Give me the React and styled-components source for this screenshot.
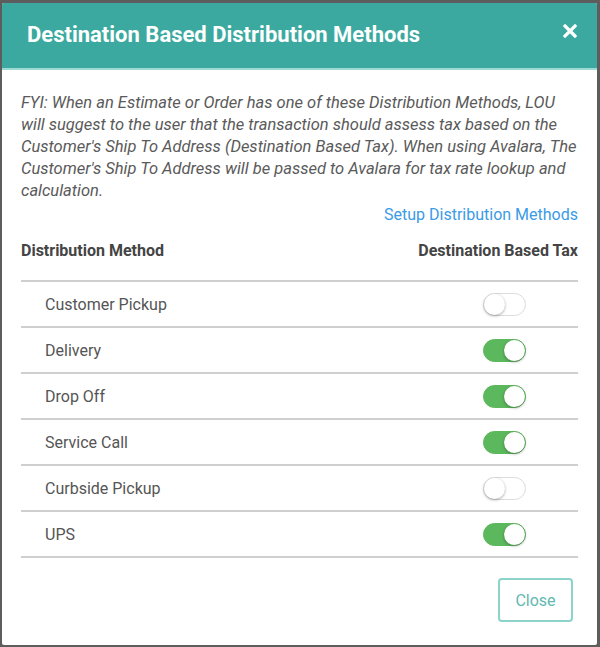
import React from "react";
import styled, { createGlobalStyle } from "styled-components";

const Global = createGlobalStyle`
  html, body { margin: 0; padding: 0; background: #5d5d5d; }
  body { font-family: Roboto, "Liberation Sans", Arial, sans-serif; }
  * { box-sizing: border-box; }
`;

const Backdrop = styled.div`
  padding: 3px 3px 2px 2px;
  height: 647px;
`;

const Dialog = styled.div`
  background: #fff;
  height: 642px;
  border-radius: 2px;
  display: flex;
  flex-direction: column;
  overflow: hidden;
`;

const Header = styled.div`
  background: #3ba99f;
  height: 67px;
  border-bottom: 2px solid #9fd9d3;
  display: flex;
  align-items: center;
  justify-content: space-between;
  padding: 0 20px 0 25px;
`;

const Title = styled.h2`
  margin: 0;
  color: #fff;
  font-size: 22px;
  font-weight: 700;
  margin-top: -2px;
`;

const CloseX = styled.button`
  border: none;
  background: none;
  color: #fff;
  padding: 0;
  margin-top: -10px;
  cursor: pointer;
  display: flex;
`;

const Body = styled.div`
  padding: 22px 19px 0 19px;
  display: flex;
  flex-direction: column;
`;

const Note = styled.p`
  margin: 0;
  font-style: italic;
  color: #5a5a5a;
  font-size: 16.5px;
  line-height: 22px;
`;

const Link = styled.a`
  align-self: flex-end;
  color: #3a9be6;
  font-size: 16px;
  text-decoration: none;
  line-height: 24px;
  margin-top: 1px;
`;

const TableHead = styled.div`
  display: flex;
  justify-content: space-between;
  font-weight: 700;
  color: #444;
  font-size: 16px;
  line-height: 20px;
  padding: 14px 0 19px;
  border-bottom: 2px solid #cfcfcf;
`;

const Row = styled.div`
  display: flex;
  justify-content: space-between;
  align-items: center;
  height: 46px;
  border-bottom: 2px solid #cfcfcf;
  padding: 0 52px 0 24px;
  color: #555;
  font-size: 16px;
`;

const Track = styled.span`
  width: 43px;
  height: 23px;
  border-radius: 12px;
  background: ${(p) => (p.$on ? "#5cb85c" : "#fff")};
  border: 1px solid ${(p) => (p.$on ? "#5cb85c" : "#dcdcdc")};
  position: relative;
  display: inline-block;
`;

const Knob = styled.span`
  position: absolute;
  top: 0px;
  left: ${(p) => (p.$on ? "20px" : "0px")};
  width: 21px;
  height: 21px;
  border-radius: 50%;
  background: #fff;
  box-shadow: 0 1px 3px rgba(0, 0, 0, 0.35);
`;

const Footer = styled.div`
  display: flex;
  justify-content: flex-end;
  padding: 20px 24px 0;
`;

const Button = styled.button`
  font-family: inherit;
  border: 2px solid #8dd3cb;
  background: #fff;
  color: #5fb9af;
  font-size: 16px;
  border-radius: 4px;
  width: 75px;
  height: 44px;
`;

const methods = [
  ["Customer Pickup", false],
  ["Delivery", true],
  ["Drop Off", true],
  ["Service Call", true],
  ["Curbside Pickup", false],
  ["UPS", true],
];

export default function App() {
  return (
    <Backdrop>
      <Global />
      <Dialog>
        <Header>
          <Title>Destination Based Distribution Methods</Title>
          <CloseX aria-label="close">
            <svg width="14" height="14" viewBox="0 0 14 14">
              <path d="M2 2 L12 12 M12 2 L2 12" stroke="#fff" strokeWidth="3.2" strokeLinecap="square" />
            </svg>
          </CloseX>
        </Header>
        <Body>
          <Note>
            FYI: When an Estimate or Order has one of these Distribution Methods, LOU will suggest to the user that the
            transaction should assess tax based on the Customer's Ship To Address (Destination Based Tax). When using
            Avalara, The Customer's Ship To Address will be passed to Avalara for tax rate lookup and calculation.
          </Note>
          <Link href="#">Setup Distribution Methods</Link>
          <TableHead>
            <span>Distribution Method</span>
            <span>Destination Based Tax</span>
          </TableHead>
          {methods.map(([name, on]) => (
            <Row key={name}>
              <span>{name}</span>
              <Track $on={on}>
                <Knob $on={on} />
              </Track>
            </Row>
          ))}
        </Body>
        <Footer>
          <Button>Close</Button>
        </Footer>
      </Dialog>
    </Backdrop>
  );
}
